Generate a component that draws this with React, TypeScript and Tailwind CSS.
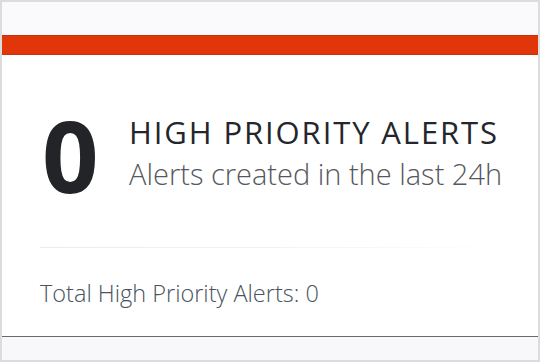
export default function App() {
  return (
    <div className="w-[540px] h-[362px] bg-[#dcdcde] p-[2px]" style={{ fontFamily: '"Open Sans", "Noto Sans", sans-serif' }}>
      <div className="flex h-full flex-col bg-white">
        <div className="h-[33px] bg-[#fafafc]" />
        <div className="h-[20px] bg-[#e0360a] border-y border-[#c93208]" />
        <div className="flex flex-1 flex-col border-b border-[#6a6a6a] pl-[38px]">
          <div className="mt-[50px] flex items-start">
            <div className="w-[89px] pl-[2px] text-[99px] font-bold leading-none text-[#222428]">0</div>
            <div className="mt-[12px] flex flex-col">
              <div className="text-[31px] leading-none tracking-[1.9px] text-[#24262b]">HIGH PRIORITY ALERTS</div>
              <div className="mt-[11px] text-[29px] font-light leading-none text-[#55585e]">Alerts created in the last 24h</div>
            </div>
          </div>
          <div className="mt-[43px] h-px bg-gradient-to-r from-[#ececec] via-[#f2f2f2] to-white mr-[40px]" />
          <div className="mt-[34px] text-[23.5px] font-light leading-none text-[#4a5360]">Total High Priority Alerts: 0</div>
        </div>
        <div className="h-[23px] bg-[#f8f8fa]" />
      </div>
    </div>
  );
}
